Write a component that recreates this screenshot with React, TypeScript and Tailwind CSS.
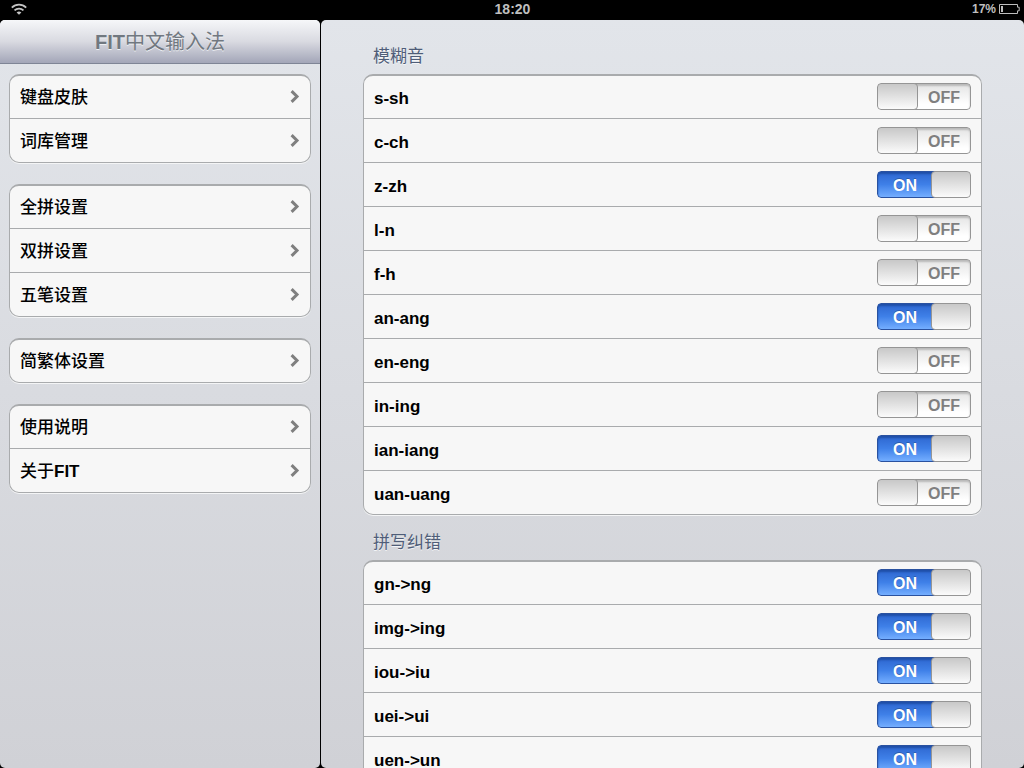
import { useState } from 'react'
import type { ReactNode } from 'react'

type MenuItem = { id: string; label: ReactNode }

const MENU: MenuItem[][] = [
  [
    { id: 'skin', label: '键盘皮肤' },
    { id: 'dict', label: '词库管理' },
  ],
  [
    { id: 'quanpin', label: '全拼设置' },
    { id: 'shuangpin', label: '双拼设置' },
    { id: 'wubi', label: '五笔设置' },
  ],
  [{ id: 'hant', label: '简繁体设置' }],
  [
    { id: 'help', label: '使用说明' },
    { id: 'about', label: <>关于<b>FIT</b></> },
  ],
]

const SECTIONS = [
  {
    title: '模糊音',
    rules: ['s-sh', 'c-ch', 'z-zh', 'l-n', 'f-h', 'an-ang', 'en-eng', 'in-ing', 'ian-iang', 'uan-uang'],
  },
  {
    title: '拼写纠错',
    rules: ['gn->ng', 'img->ing', 'iou->iu', 'uei->ui', 'uen->un'],
  },
]

const INITIALLY_ON = ['z-zh', 'an-ang', 'ian-iang', 'gn->ng', 'img->ing', 'iou->iu', 'uei->ui', 'uen->un']

function WifiIcon() {
  return (
    <svg className="h-3 w-4" viewBox="0 0 16 12" fill="none" stroke="#c4c4c4" strokeWidth="1.8" aria-hidden="true">
      <path d="M0.8 4.6C4.9 0.6 11.1 0.6 15.2 4.6" />
      <path d="M3.5 7.4C6 5 10 5 12.5 7.4" />
      <path d="M8 11.8L5.6 9.4C7 8.1 9 8.1 10.4 9.4Z" fill="#c4c4c4" stroke="none" />
    </svg>
  )
}

function BatteryIcon() {
  return (
    <svg className="h-[10px] w-[21px]" viewBox="0 0 21 10" fill="none" stroke="#bdbdbd" aria-hidden="true">
      <path d="M0.5 0.5H18.5V3.2H20.2V6.8H18.5V9.5H0.5Z" />
      <rect x="2" y="2" width="2" height="6" fill="#bdbdbd" stroke="none" />
    </svg>
  )
}

function Chevron() {
  return (
    <svg className="h-[14px] w-[10px]" viewBox="0 0 10 14" fill="none" stroke="#7f7f7f" strokeWidth="3" aria-hidden="true">
      <path d="M1.6 1.1L7 6.5L1.6 11.9" />
    </svg>
  )
}

function StatusBar() {
  return (
    <header className="grid h-5 shrink-0 grid-cols-3 items-center bg-black pr-1 pb-[2px] pl-[11px] font-bold text-[#bfbfbf]">
      <WifiIcon />
      <span className="pr-[6px] text-center text-sm leading-[18px]">18:20</span>
      <span className="flex items-center justify-end gap-[3px] text-xs leading-[18px]">
        17%
        <BatteryIcon />
      </span>
    </header>
  )
}

function Group({ children }: { children: ReactNode }) {
  return (
    <ul className="rounded-[10px] border border-t-2 border-[#a9abad] bg-[#f7f7f7] shadow-[0_1px_0_#f4f5f6]">
      {children}
    </ul>
  )
}

function Row({ children }: { children: ReactNode }) {
  return (
    <li className="border-t border-[#a9abad] px-[10px] py-2 first:border-t-0 first:pt-[7px]">{children}</li>
  )
}

function Toggle({ id, on, onChange }: { id: string; on: boolean; onChange: () => void }) {
  return (
    <span className="relative flex h-[27px] w-[94px] overflow-hidden rounded text-center text-base leading-[27px] font-bold">
      <input
        id={id}
        type="checkbox"
        checked={on}
        onChange={onChange}
        className="absolute inset-0 z-20 h-full w-full cursor-pointer opacity-0"
      />
      {on ? (
        <>
          <span className="-mr-1 w-[58px] rounded-l border border-[#2a52a0] bg-linear-to-b from-[#2d66cf] via-[#3f80e8] to-[#74aeff] pr-[2px] text-white shadow-[inset_0_2px_2px_#2050a8] [text-shadow:0_-1px_0_#2c5cae]">
            ON
          </span>
          <span className="z-10 w-10 rounded border border-[#959595] bg-linear-to-b from-[#c8c8c8] to-[#fbfbfb]" />
        </>
      ) : (
        <>
          <span className="z-10 w-[41px] rounded border border-[#959595] bg-linear-to-b from-[#c8c8c8] to-[#fbfbfb]" />
          <span className="-ml-1 flex-1 rounded-r border border-[#959595] bg-linear-to-b from-[#e4e4e4] to-white to-80% pl-[3px] text-[#7f7f7f] shadow-[inset_0_2px_2px_#b9b9b9]">
            OFF
          </span>
        </>
      )}
    </span>
  )
}

function Sidebar() {
  return (
    <aside className="w-80 shrink-0 overflow-hidden rounded-[5px] bg-linear-to-b from-[#e2e5ea] to-[#d0d1d6]">
      <h1 className="h-11 border-b border-[#7f8596] bg-linear-to-b from-[#f6f7f9] via-[#d9dae1] to-[#a3a6b8] text-center text-xl leading-[44px] text-[#717880] [text-shadow:0_1px_0_#eef0f3]">
        <b>FIT</b>中文输入法
      </h1>
      <nav className="flex flex-col gap-[21px] px-[9px] pt-[10px]">
        {MENU.map((items) => (
          <Group key={items[0].id}>
            {items.map((item) => (
              <Row key={item.id}>
                <a
                  href={`#${item.id}`}
                  className="flex h-[27px] items-center justify-between text-[17px] leading-[27px] font-medium text-black"
                >
                  <span className="pt-[2px]">{item.label}</span>
                  <Chevron />
                </a>
              </Row>
            ))}
          </Group>
        ))}
      </nav>
    </aside>
  )
}

function Settings() {
  const [enabled, setEnabled] = useState(() => new Set(INITIALLY_ON))

  const toggle = (rule: string) => {
    const next = new Set(enabled)
    if (!next.delete(rule)) next.add(rule)
    setEnabled(next)
  }

  return (
    <main className="min-w-0 flex-1 overflow-y-auto rounded-[5px] bg-linear-to-b from-[#e2e5ea] to-[#d0d1d6] px-[42px] pt-[9px] [scrollbar-width:none]">
      {SECTIONS.map((section) => (
        <section key={section.title}>
          <h2 className="h-[45px] px-[10px] pt-[15px] text-[17px] leading-[26px] text-[#4f5d78] [text-shadow:0_1px_0_#f4f5f7]">
            {section.title}
          </h2>
          <Group>
            {section.rules.map((rule) => (
              <Row key={rule}>
                <div className="flex h-[27px] items-center justify-between">
                  <label htmlFor={rule} className="pt-[3px] text-[17px] leading-[27px] font-bold text-black">
                    {rule}
                  </label>
                  <Toggle id={rule} on={enabled.has(rule)} onChange={() => toggle(rule)} />
                </div>
              </Row>
            ))}
          </Group>
        </section>
      ))}
    </main>
  )
}

export default function App() {
  return (
    <div className="flex h-screen flex-col bg-black font-['Liberation_Sans','Noto_Sans_CJK_SC',sans-serif]">
      <StatusBar />
      <div className="flex min-h-0 flex-1 gap-px">
        <Sidebar />
        <Settings />
      </div>
    </div>
  )
}
